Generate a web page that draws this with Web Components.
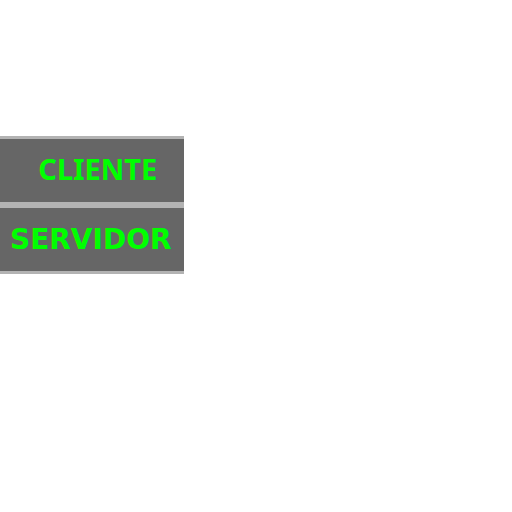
<!DOCTYPE html>
<html lang="es"><head><meta charset="utf-8"><title>Menú</title>
<style>body{margin:0;background:#fff}</style></head><body>
<side-menu><menu-item href="#cliente" class="compact">CLIENTE</menu-item><menu-item href="#servidor">SERVIDOR</menu-item></side-menu>
<script>
customElements.define('side-menu', class extends HTMLElement{
constructor(){super();this.attachShadow({mode:'open'}).innerHTML=`<style>
:host{display:block;padding-top:136px}
nav{display:flex;flex-direction:column;width:fit-content}
</style><nav><slot></slot></nav>`}});
customElements.define('menu-item', class extends HTMLElement{
constructor(){super();this.attachShadow({mode:'open'}).innerHTML=`<style>
:host{display:block;border:solid #b3b3b3;border-width:3px 0;background:#666}
a{display:block;padding:14px 12px 13px 10px;text-align:center;color:#0f0;text-decoration:none;font:bold 28px/36px "DejaVu Sans",Verdana,sans-serif}
:host(.compact) a{padding:12px 12px 15px 24px;font-family:"Noto Sans",Tahoma,sans-serif;font-size:29px}
</style><a><slot></slot></a>`}
connectedCallback(){this.shadowRoot.querySelector('a').href=this.getAttribute('href')}});
</script></body></html>
